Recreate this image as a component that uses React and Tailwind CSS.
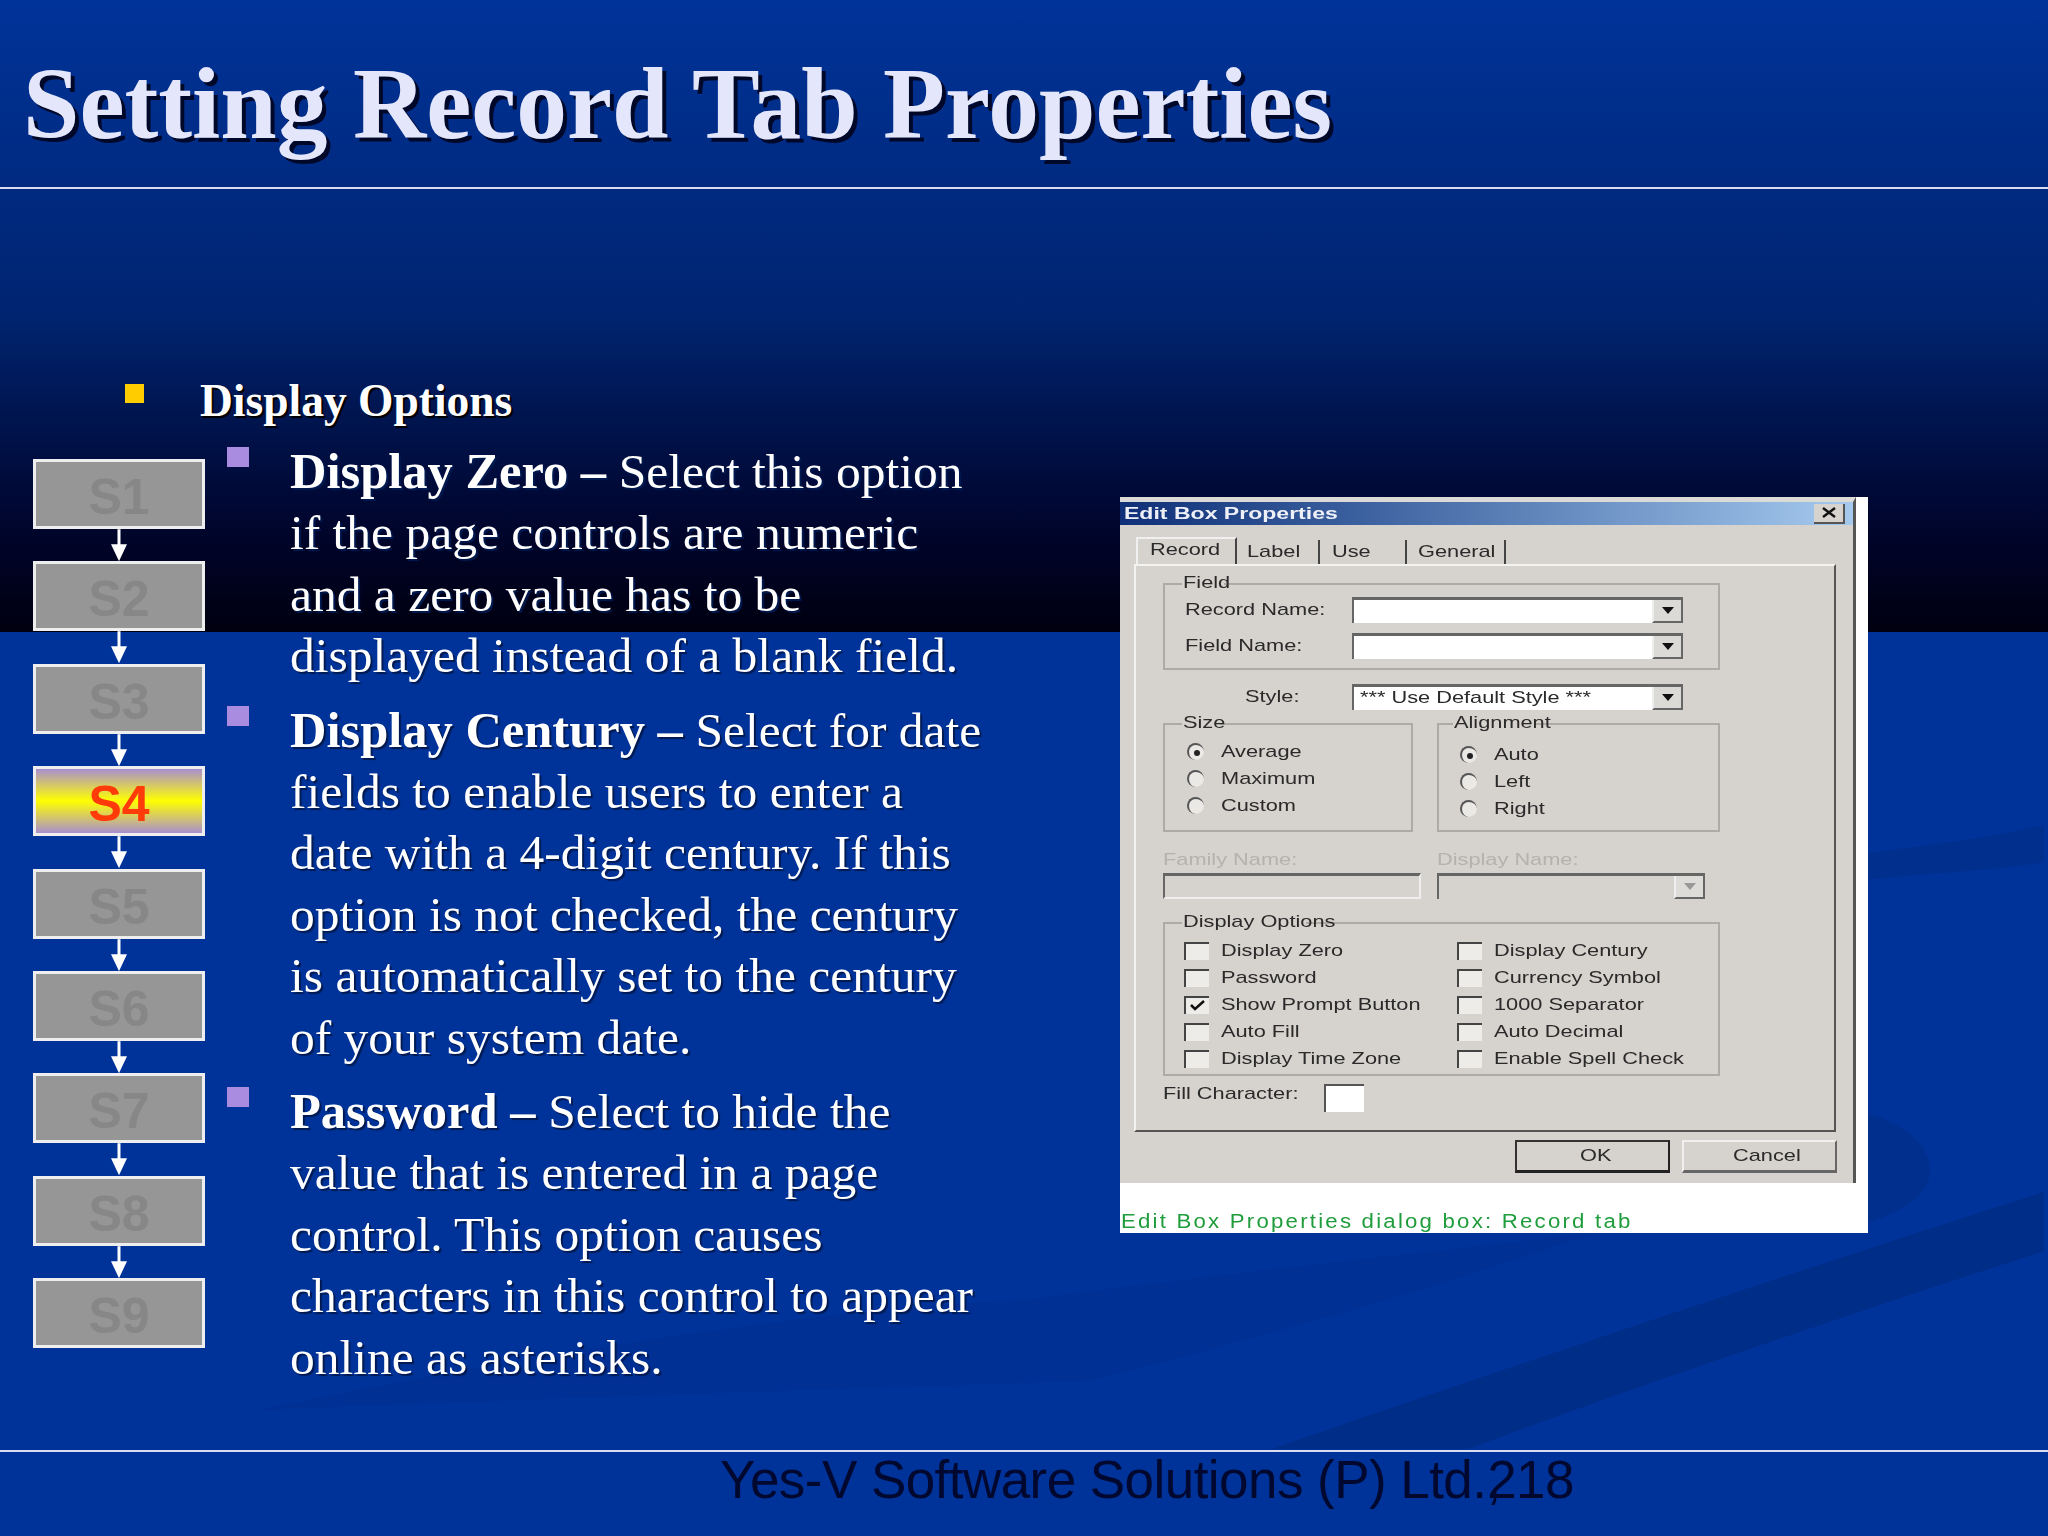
import React from 'react';

const steps = ['S1', 'S2', 'S3', 'S4', 'S5', 'S6', 'S7', 'S8', 'S9'];

const items = [
    {
        lead: 'Display Zero – ',
        lines: ['Select this option', 'if the page controls are numeric', 'and a zero value has to be', 'displayed instead of a blank field.'],
    },
    {
        lead: 'Display Century – ',
        lines: ['Select for date', 'fields to enable users to enter a', 'date with a 4-digit century. If this', 'option is not checked, the century', 'is automatically set to the century', 'of your system date.'],
    },
    {
        lead: 'Password – ',
        lines: ['Select to hide the', 'value that is entered in a page', 'control. This option causes', 'characters in this control to appear', 'online as asterisks.'],
    },
];

const optionRows = [
    ['Display Zero', 'Display Century', false],
    ['Password', 'Currency Symbol', false],
    ['Show Prompt Button', '1000 Separator', true],
    ['Auto Fill', 'Auto Decimal', false],
    ['Display Time Zone', 'Enable Spell Check', false],
];

const Txt = ({ children, className = '' }) => (
    <span className={`block w-max origin-left scale-x-[1.28] whitespace-nowrap text-[17px] leading-[18px] blur-[0.5px] font-['Liberation_Sans',sans-serif] ${className || 'text-[#2a2a2a]'}`}>
        {children}
    </span>
);

const Group = ({ title, className = '', legendClass = 'left-[17px]', children }) => (
    <div className={`relative border-2 border-[#aeaba7] ${className}`}>
        <div className={`absolute -top-[11px] h-[18px] bg-[#d6d2ce] pr-[4px] pl-[1px] ${legendClass}`}>
            <Txt>{title}</Txt>
        </div>
        {children}
    </div>
);

const Arrow = ({ muted }) => (
    <span className={`flex w-[31px] shrink-0 items-center justify-center border-r-2 border-b-2 border-l-2 border-r-[#666] border-b-[#666] border-l-[#eeeeee] ${muted ? 'bg-[#dedcd8]' : 'bg-[#dcdad6]'}`}>
        <svg width="12" height="7" viewBox="0 0 12 7"><path d="M0 0h12L6 7z" fill={muted ? '#999' : '#111'} /></svg>
    </span>
);

const Combo = ({ className = '', text, disabled }) => (
    <div className={`flex h-[26px] items-stretch border-t-[3px] border-l-2 border-[#666] ${disabled ? 'bg-[#d6d2ce]' : 'bg-white'} ${className}`}>
        <div className="flex flex-1 items-center overflow-hidden pl-[6px]">
            {text && <Txt>{text}</Txt>}
        </div>
        <Arrow muted={disabled} />
    </div>
);

const Radio = ({ on, label }) => (
    <div className="flex h-[27px] items-center">
        <span className="flex h-[17px] w-[17px] items-center justify-center rounded-full border-t-2 border-l-2 border-[#555] bg-[#ebe9e6] blur-[0.4px]">
            {on && <span className="h-[6px] w-[6px] rounded-full bg-[#222]" />}
        </span>
        <span className="ml-[17px]"><Txt>{label}</Txt></span>
    </div>
);

const Check = ({ on, label }) => (
    <div className="flex h-[27px] items-center">
        <span className="flex h-[18px] w-[25px] shrink-0 items-center justify-center border-t-2 border-l-2 border-[#444] bg-[#eeece9] blur-[0.3px]">
            {on && (
                <svg width="15" height="11" viewBox="0 0 15 11"><path d="M1 5l4 4 9-8" fill="none" stroke="#111" strokeWidth="2.5" /></svg>
            )}
        </span>
        <span className="ml-[12px]"><Txt>{label}</Txt></span>
    </div>
);

const DialogBox = () => (
    <div className="h-[736px] w-[748px] bg-white">
        <div className="flex h-[686px] w-[736px] flex-col border-t-[5px] border-r-[3px] border-t-[#dcdad6] border-r-[#555] bg-[#d6d2ce]">
            {/* title bar */}
            <div className="flex h-[23px] shrink-0 items-center justify-between bg-gradient-to-r from-[#0f2f78] to-[#a6caee] pr-[8px] pl-[4px]">
                <span className="origin-left scale-x-[1.44] text-[16px] font-bold leading-none text-[#eef0f8] blur-[0.4px] font-['Liberation_Sans',sans-serif]">Edit Box Properties</span>
                <span className="flex h-[20px] w-[31px] items-center justify-center border-r-2 border-b-2 border-[#555] bg-[#d6d2ce]">
                    <svg width="16" height="11" viewBox="0 0 16 11"><path d="M2 1l12 9M14 1L2 10" stroke="#111" strokeWidth="2.4" /></svg>
                </span>
            </div>

            {/* tabs */}
            <div className="mt-[12px] flex h-[27px] shrink-0 items-start pl-[16px]">
                <div className="flex h-[27px] w-[101px] items-center border-t-2 border-r-2 border-l-2 border-t-[#f0f0f0] border-r-[#444] border-l-[#f0f0f0] pb-[3px] pl-[12px]"><Txt>Record</Txt></div>
                <div className="mt-[3px] flex h-[24px] w-[83px] items-center border-r-2 border-[#444] pl-[10px]"><Txt>Label</Txt></div>
                <div className="mt-[3px] flex h-[24px] w-[87px] items-center border-r-2 border-[#444] pl-[12px]"><Txt>Use</Txt></div>
                <div className="mt-[3px] flex h-[24px] w-[99px] items-center border-r-2 border-[#444] pl-[11px]"><Txt>General</Txt></div>
            </div>

            {/* panel */}
            <div className="ml-[14px] h-[568px] w-[702px] shrink-0 border-2 border-t-[#f2f2f0] border-r-[#555] border-b-[#555] border-l-[#f2f2f0] pt-[17px] pl-[27px]">
                <Group title="Field" className="h-[87px] w-[557px]">
                    <div className="mt-[12px] flex items-center pl-[20px]">
                        <span className="w-[167px]"><Txt>Record Name:</Txt></span>
                        <Combo className="w-[331px]" />
                    </div>
                    <div className="mt-[10px] flex items-center pl-[20px]">
                        <span className="w-[167px]"><Txt>Field Name:</Txt></span>
                        <Combo className="w-[331px]" />
                    </div>
                </Group>

                <div className="mt-[13px] flex h-[27px] items-center pl-[82px]">
                    <span className="w-[107px]"><Txt>Style:</Txt></span>
                    <Combo className="w-[331px]" text="*** Use Default Style ***" />
                </div>

                <div className="mt-[13px] flex gap-[24px]">
                    <Group title="Size" className="h-[109px] w-[250px] pt-[13px] pl-[22px]">
                        <Radio on label="Average" />
                        <Radio label="Maximum" />
                        <Radio label="Custom" />
                    </Group>
                    <Group title="Alignment" legendClass="left-[14px]" className="h-[109px] w-[283px] pt-[16px] pl-[21px]">
                        <Radio on label="Auto" />
                        <Radio label="Left" />
                        <Radio label="Right" />
                    </Group>
                </div>

                <div className="mt-[19px] flex gap-[16px]">
                    <div className="w-[258px]">
                        <Txt className="text-[#b4b2ae]">Family Name:</Txt>
                        <div className="mt-[4px] h-[26px] border-t-[3px] border-r-2 border-b-2 border-l-2 border-t-[#666] border-r-[#eeeeee] border-b-[#eeeeee] border-l-[#666]" />
                    </div>
                    <div className="w-[268px]">
                        <Txt className="text-[#b4b2ae]">Display Name:</Txt>
                        <Combo className="mt-[4px] w-[268px]" disabled />
                    </div>
                </div>

                <Group title="Display Options" className="mt-[23px] h-[154px] w-[557px] pt-[13px] pl-[19px]">
                    {optionRows.map(([left, right, on]) => (
                        <div key={left} className="flex">
                            <div className="w-[273px]"><Check on={on} label={left} /></div>
                            <Check label={right} />
                        </div>
                    ))}
                </Group>

                <div className="mt-[8px] flex h-[28px] items-start">
                    <span className="w-[161px] pt-[1px]"><Txt>Fill Character:</Txt></span>
                    <span className="h-[28px] w-[40px] border-t-2 border-l-2 border-[#555] bg-white" />
                </div>
            </div>

            {/* buttons */}
            <div className="mt-[8px] flex justify-end gap-[12px] pr-[16px]">
                <div className="flex h-[33px] w-[155px] items-center justify-center border-2 border-b-[3px] border-t-[#333] border-r-[#222] border-b-[#222] border-l-[#333]"><Txt>OK</Txt></div>
                <div className="flex h-[33px] w-[155px] items-center justify-center border-t-2 border-r-2 border-b-[3px] border-l-2 border-t-[#f0f0f0] border-r-[#666] border-b-[#666] border-l-[#f0f0f0]"><Txt>Cancel</Txt></div>
            </div>
        </div>
        <div className="mt-[28px] pl-[1px]">
            <span className="inline-block origin-left scale-x-[1.11] whitespace-nowrap text-[20px] leading-[20px] tracking-[2px] text-[#1f9d3c] blur-[0.4px] font-['Liberation_Sans',sans-serif]">Edit Box Properties dialog box: Record tab</span>
        </div>
    </div>
);

const StepBox = ({ label }) => {
    const active = label === 'S4';
    return (
        <div
            className={`flex h-[70px] w-[172px] items-center justify-center border-[3px] border-[#eeeeee] pt-[6px] text-[50px] font-bold leading-none font-['Liberation_Sans',sans-serif] ${
                active
                    ? 'bg-linear-to-b/srgb from-[#a98fd0] via-[#ffff00] to-[#a98fd0] text-[#ff3b0a]'
                    : 'bg-[#969696] text-[#878787]'
            }`}
        >
            {label}
        </div>
    );
};

const StepArrow = () => (
    <svg width="18" height="32.4" viewBox="0 0 18 32" className="block">
        <path d="M9 0v16" stroke="#fff" strokeWidth="3" />
        <path d="M1 15h16l-8 17z" fill="#fff" />
    </svg>
);

export default function App() {
    return (
        <div className="relative flex h-[1536px] w-[2048px] flex-col overflow-hidden bg-[#003399] font-['Liberation_Serif',serif] text-white">
            {/* dark top gradient */}
            <div className="absolute inset-x-0 top-0 h-[632px] bg-gradient-to-b from-[#003399] via-[#002470] to-[#000010]" />

            {/* background swoosh */}
            <svg className="absolute inset-0" width="2048" height="1536" viewBox="0 0 2048 1536">
                <g fill="#002f8e">
                    <path d="M1868 853C1930 845 1990 838 2044 825V862C1990 872 1930 872 1868 880z" />
                    <path d="M1868 1113C1905 1125 1930 1145 1930 1170 1930 1195 1905 1210 1868 1223z" />
                    <path d="M2044 1192C1800 1270 1500 1370 1272 1449H1468C1600 1400 1800 1330 2044 1251z" fill="#002d88" />
                    <path d="M260 1410C500 1360 800 1310 1024 1300 1250 1270 1450 1250 1593 1233 1450 1285 1250 1340 1089 1381 800 1390 500 1400 260 1410z" fill="#003093" />
                </g>
            </svg>

            {/* header */}
            <header className="relative h-[189px] shrink-0 border-b-2 border-[#d8dcf0] pt-[49px] pl-[23px]">
                <h1 className="whitespace-nowrap text-[101.5px] font-bold leading-[110px] text-[#e4e6fb] [text-shadow:4px_4px_0_#00082a]">
                    Setting Record Tab Properties
                </h1>
            </header>

            {/* body */}
            <main className="relative flex flex-1 flex-col">
                <div className="mt-[191px] flex h-[42px] items-start pl-[125px]">
                    <span className="mt-[4px] h-[19px] w-[19px] bg-[#ffcc00]" />
                    <span className="ml-[56px] text-[45.5px] font-bold leading-[42px] text-white [text-shadow:2px_2px_0_#000]">Display Options</span>
                </div>

                <div className="flex">
                    {/* step column */}
                    <div className="mt-[37px] ml-[33px] flex w-[172px] shrink-0 flex-col items-center">
                        {steps.map((s, i) => (
                            <React.Fragment key={s}>
                                <StepBox label={s} />
                                {i < steps.length - 1 && <StepArrow />}
                            </React.Fragment>
                        ))}
                    </div>

                    {/* bullet list */}
                    <div className="mt-[19px] ml-[22px] flex w-[893px] shrink-0 flex-col gap-[13px]">
                        {items.map((item) => (
                            <div key={item.lead} className="flex">
                                <span className="mt-[6px] h-[20px] w-[22px] shrink-0 bg-[#a98be0]" />
                                <div className="ml-[41px] text-[49.5px] leading-[61.4px] [text-shadow:2px_2px_1px_#001a50]">
                                    {item.lines.map((line, i) => (
                                        <div key={line} className="whitespace-nowrap">
                                            {i === 0 && <b className="text-[50.5px]">{item.lead}</b>}
                                            {line}
                                        </div>
                                    ))}
                                </div>
                            </div>
                        ))}
                    </div>

                    {/* dialog screenshot */}
                    <div className="mt-[75px] shrink-0">
                        <DialogBox />
                    </div>
                </div>
            </main>

            {/* footer */}
            <footer className="relative h-[86px] shrink-0 border-t-2 border-[#d8dcf0] pl-[720px]">
                <span className="whitespace-nowrap text-[53px] leading-[56px] tracking-[-0.55px] text-[#00082f] font-['Liberation_Sans',sans-serif]">
                    Yes-V Software Solutions (P) Ltd.<span className="tracking-[-14px]">,</span>218
                </span>
            </footer>
        </div>
    );
}
